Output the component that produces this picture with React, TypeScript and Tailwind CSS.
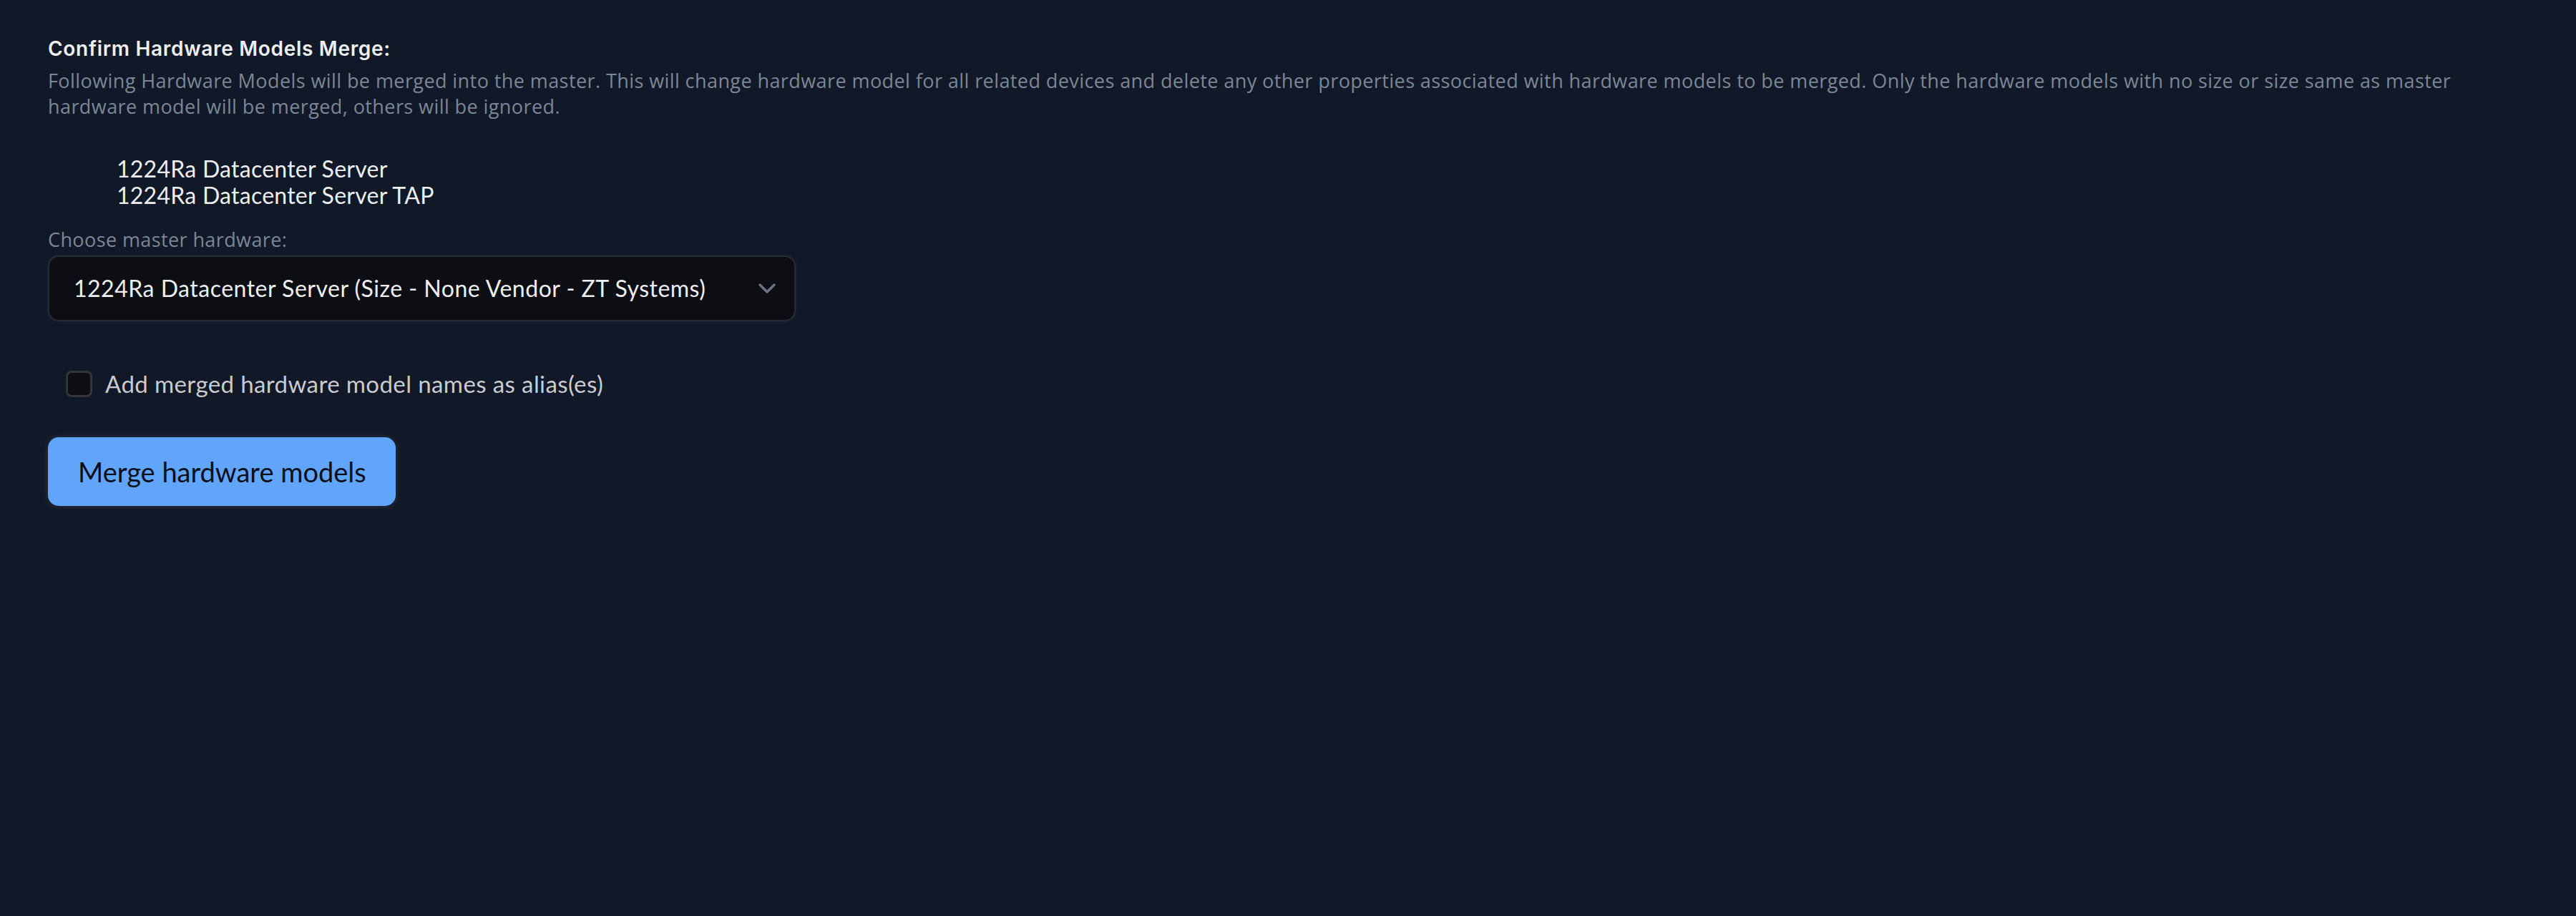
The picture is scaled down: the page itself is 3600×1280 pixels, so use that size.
import React from "react";

export default function App() {
  return (
    <div className="min-h-[1280px] w-full bg-[#111827] pl-[67px] pt-[50px]">
      <h2 className="text-[28px] leading-[36px] font-semibold tracking-[0.7px] text-[#eceef1] [font-family:Inter,'Noto_Sans',sans-serif]">
        Confirm Hardware Models Merge:
      </h2>
      <p className="mt-[9px] w-[3430px] text-[27px] leading-[36px] text-[#7b8796] [font-family:'Open_Sans',sans-serif] tracking-[0.42px]">
        Following Hardware Models will be merged into the master. This will change hardware model for all related devices and delete any other properties associated with hardware models to be merged. Only the hardware models with no size or size same as master hardware model will be merged, others will be ignored.
      </p>
      <ul className="mt-[50px] pl-[96px] text-[32px] leading-[37px] tracking-[0.25px] text-[#eceef1] [font-family:Lato,'Noto_Sans',sans-serif]">
        <li>1224Ra Datacenter Server</li>
        <li>1224Ra Datacenter Server TAP</li>
      </ul>
      <div className="mt-[26px] text-[27px] leading-[36px] text-[#7b8796] [font-family:'Open_Sans',sans-serif] tracking-[0.4px]">
        Choose master hardware:
      </div>
      <div className="mt-[4px] flex h-[92px] w-[1045px] items-center justify-between rounded-[15px] border-2 border-[#262b36] bg-[#0c0e14] pl-[34px] pr-[26px] shadow-[0_0_6px_rgba(255,255,255,0.06)] [font-family:Lato,'Noto_Sans',sans-serif]">
        <span className="text-[32px] tracking-[0.5px] text-[#eceef1]">
          1224Ra Datacenter Server (Size - None Vendor - ZT Systems)
        </span>
        <svg width="24" height="16" viewBox="0 0 24 16" fill="none" stroke="#6b7280" strokeWidth="3.5" strokeLinecap="round" strokeLinejoin="round">
          <path d="M2 3 L12 13 L22 3" />
        </svg>
      </div>
      <label className="mt-[67px] ml-[25px] flex items-center gap-[18px] [font-family:Lato,'Noto_Sans',sans-serif]">
        <span className="block h-[37px] w-[37px] rounded-[8px] border-[3px] border-[#34363c] bg-[#0c0e14]" />
        <span className="text-[33px] leading-[40px] tracking-[0.4px] text-[#c9cbd0]">
          Add merged hardware model names as alias(es)
        </span>
      </label>
      <button className="mt-[55px] flex h-[96px] w-[486px] items-center rounded-[15px] bg-[#60a5fa] pl-[42px] text-[38px] text-[#0a0f1a] shadow-[0_0_8px_rgba(255,255,255,0.12)] [font-family:Lato,'Noto_Sans',sans-serif]">
        Merge hardware models
      </button>
    </div>
  );
}
